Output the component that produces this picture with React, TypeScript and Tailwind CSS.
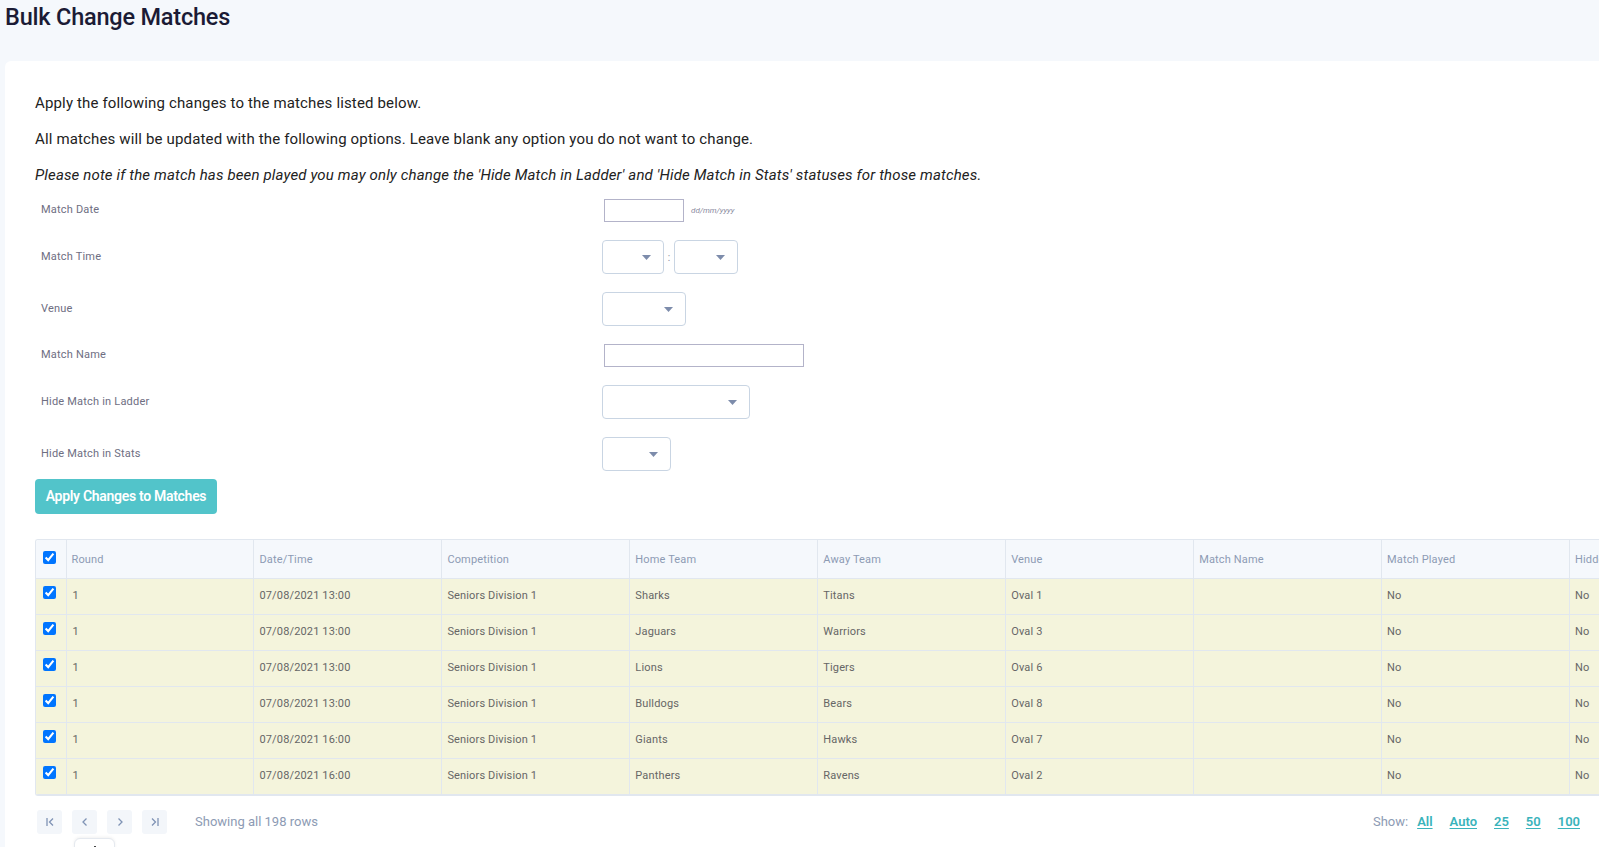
import React from "react";

const rows = [
  { date: "07/08/2021 13:00", home: "Sharks", away: "Titans", venue: "Oval 1" },
  { date: "07/08/2021 13:00", home: "Jaguars", away: "Warriors", venue: "Oval 3" },
  { date: "07/08/2021 13:00", home: "Lions", away: "Tigers", venue: "Oval 6" },
  { date: "07/08/2021 13:00", home: "Bulldogs", away: "Bears", venue: "Oval 8" },
  { date: "07/08/2021 16:00", home: "Giants", away: "Hawks", venue: "Oval 7" },
  { date: "07/08/2021 16:00", home: "Panthers", away: "Ravens", venue: "Oval 2" },
  { date: "07/08/2021 16:00", home: "Eagles", away: "Wolves", venue: "Oval 4" },
];

const columns = ["Round", "Date/Time", "Competition", "Home Team", "Away Team", "Venue", "Match Name", "Match Played", "Hidden"];

function Select({ width }: { width: string }) {
  return (
    <div className={`${width} h-[34px] rounded-[4px] border border-[#c9d5e3] bg-white flex items-center justify-end pr-[12px]`}>
      <svg width="9" height="5" viewBox="0 0 9 5">
        <path d="M0 0h9L4.5 5z" fill="#7d8cab" />
      </svg>
    </div>
  );
}

function TextInput({ width }: { width: string }) {
  return <div className={`${width} h-[23px] border border-[#b3b3c9] bg-white`} />;
}

function FormRow({ label, children }: { label: string; children: React.ReactNode }) {
  return (
    <div className="flex items-center">
      <div className="w-[567px] shrink-0 pl-[6px] text-[11px] tracking-[0.2px] text-[#6e6e82]">{label}</div>
      {children}
    </div>
  );
}

function PageBtn({ d }: { d: string }) {
  return (
    <div className="w-[25px] h-[24px] rounded-[3px] bg-[#f3f6fa] flex items-center justify-center">
      <svg width="12" height="12" viewBox="0 0 12 12" fill="none" stroke="#7f93b5" strokeWidth="1.3">
        <path d={d} />
      </svg>
    </div>
  );
}

export default function App() {
  return (
    <div className="w-screen h-screen overflow-hidden bg-[#f5f8fc] flex flex-col" style={{ fontFamily: "Roboto, 'Liberation Sans', sans-serif" }}>
      <div className="h-[61px] shrink-0 pl-[5px] pt-[1px]">
        <h1 className="text-[23.5px] leading-[32px] font-medium text-[#1b1b35] tracking-[-0.2px]">Bulk Change Matches</h1>
      </div>
      <div className="flex-1 ml-[5px] bg-white rounded-tl-[6px] pl-[30px] pt-[32px] overflow-hidden">
        <p className="text-[15px] leading-[20px] tracking-[0.15px] text-[#222]">Apply the following changes to the matches listed below.</p>
        <p className="mt-[16px] text-[15px] leading-[20px] tracking-[0.15px] text-[#222]">All matches will be updated with the following options. Leave blank any option you do not want to change.</p>
        <p className="mt-[16px] text-[15px] leading-[20px] tracking-[0.15px] text-[#222] italic">Please note if the match has been played you may only change the 'Hide Match in Ladder' and 'Hide Match in Stats' statuses for those matches.</p>

        <div className="mt-[14px] flex flex-col gap-[18px]">
          <FormRow label="Match Date">
            <div className="flex items-center pl-[2px]">
              <TextInput width="w-[80px]" />
              <span className="ml-[7px] text-[8px] italic text-[#8a8aa0]">dd/mm/yyyy</span>
            </div>
          </FormRow>
          <FormRow label="Match Time">
            <div className="flex items-center">
              <Select width="w-[62px]" />
              <span className="w-[10px] text-center text-[10px] text-[#8a8aa0]">:</span>
              <Select width="w-[64px]" />
            </div>
          </FormRow>
          <FormRow label="Venue">
            <Select width="w-[84px]" />
          </FormRow>
          <FormRow label="Match Name">
            <div className="pl-[2px]">
              <TextInput width="w-[200px]" />
            </div>
          </FormRow>
          <FormRow label="Hide Match in Ladder">
            <Select width="w-[148px]" />
          </FormRow>
          <FormRow label="Hide Match in Stats">
            <Select width="w-[69px]" />
          </FormRow>
        </div>

        <button className="mt-[8px] h-[35px] w-[182px] rounded-[4px] bg-[#52c4ca] text-white text-[14px] font-semibold tracking-[-0.3px]">
          Apply Changes to Matches
        </button>

        <div className="mt-[25px] h-[257px] overflow-hidden border border-[#e1e7ef] rounded-tl-[3px] rounded-bl-[3px] border-r-0">
          <table className="border-collapse table-fixed w-[1722px]">
            <colgroup>
              <col className="w-[30px]" />
              {columns.map((c) => (
                <col key={c} className="w-[187.8px]" />
              ))}
            </colgroup>
            <thead>
              <tr className="h-[38px] bg-[#f5f8fc]">
                <th className="border-r border-b border-[#e1e7ef] text-left pl-[7px] align-middle">
                  <input type="checkbox" checked readOnly className="w-[13px] h-[13px] m-0 align-middle -mt-[4px]" />
                </th>
                {columns.map((c) => (
                  <th key={c} className="border-r border-b border-[#e1e7ef] text-left pl-[5px] pt-[3px] text-[11px] tracking-[0.15px] font-normal text-[#8d9bb4]">
                    {c}
                  </th>
                ))}
              </tr>
            </thead>
            <tbody>
              {rows.map((r, i) => (
                <tr key={i} className="h-[36px] bg-[#f4f4dc] text-[11px] tracking-[0.15px] text-[#666]">
                  <td className="border-r border-b border-[#e1e7ef] pl-[7px] align-middle">
                    <input type="checkbox" checked readOnly className="w-[13px] h-[13px] m-0 align-middle -mt-[6px]" />
                  </td>
                  <td className="border-r border-b border-[#e1e7ef] pl-[6px]">1</td>
                  <td className="border-r border-b border-[#e1e7ef] pl-[5px]">{r.date}</td>
                  <td className="border-r border-b border-[#e1e7ef] pl-[5px]">Seniors Division 1</td>
                  <td className="border-r border-b border-[#e1e7ef] pl-[5px]">{r.home}</td>
                  <td className="border-r border-b border-[#e1e7ef] pl-[5px]">{r.away}</td>
                  <td className="border-r border-b border-[#e1e7ef] pl-[5px]">{r.venue}</td>
                  <td className="border-r border-b border-[#e1e7ef] pl-[5px]"></td>
                  <td className="border-r border-b border-[#e1e7ef] pl-[5px]">No</td>
                  <td className="border-r border-b border-[#e1e7ef] pl-[5px]">No</td>
                </tr>
              ))}
            </tbody>
          </table>
        </div>

        <div className="mt-[14px] flex items-center">
          <div className="flex items-center gap-[10px] pl-[2px]">
            <PageBtn d="M3 2v8M9 2.5 5.5 6 9 9.5" />
            <PageBtn d="M7.5 2.5 4 6l3.5 3.5" />
            <PageBtn d="M4.5 2.5 8 6l-3.5 3.5" />
            <PageBtn d="M9 2v8M3 2.5 6.5 6 3 9.5" />
          </div>
          <span className="ml-[28px] text-[13px] text-[#8d9bb4]">Showing all 198 rows</span>
          <div className="ml-auto mr-[19px] flex items-center gap-[17px] text-[13px]">
            <span className="text-[#8d9bb4] -mr-[8px]">Show:</span>
            {["All", "Auto", "25", "50", "100"].map((s) => (
              <a key={s} className="font-semibold text-[#3ab3bb] underline underline-offset-2">
                {s}
              </a>
            ))}
          </div>
        </div>
        <div className="mt-[4px] ml-[39px] w-[41px] h-[30px] bg-white border border-[#e5e9ef] rounded-t-[6px] shadow-[0_-1px_3px_rgba(0,0,0,0.06)] flex justify-center pt-[7px]">
          <div className="w-[2px] h-[4px] bg-[#444]" />
        </div>
      </div>
    </div>
  );
}
